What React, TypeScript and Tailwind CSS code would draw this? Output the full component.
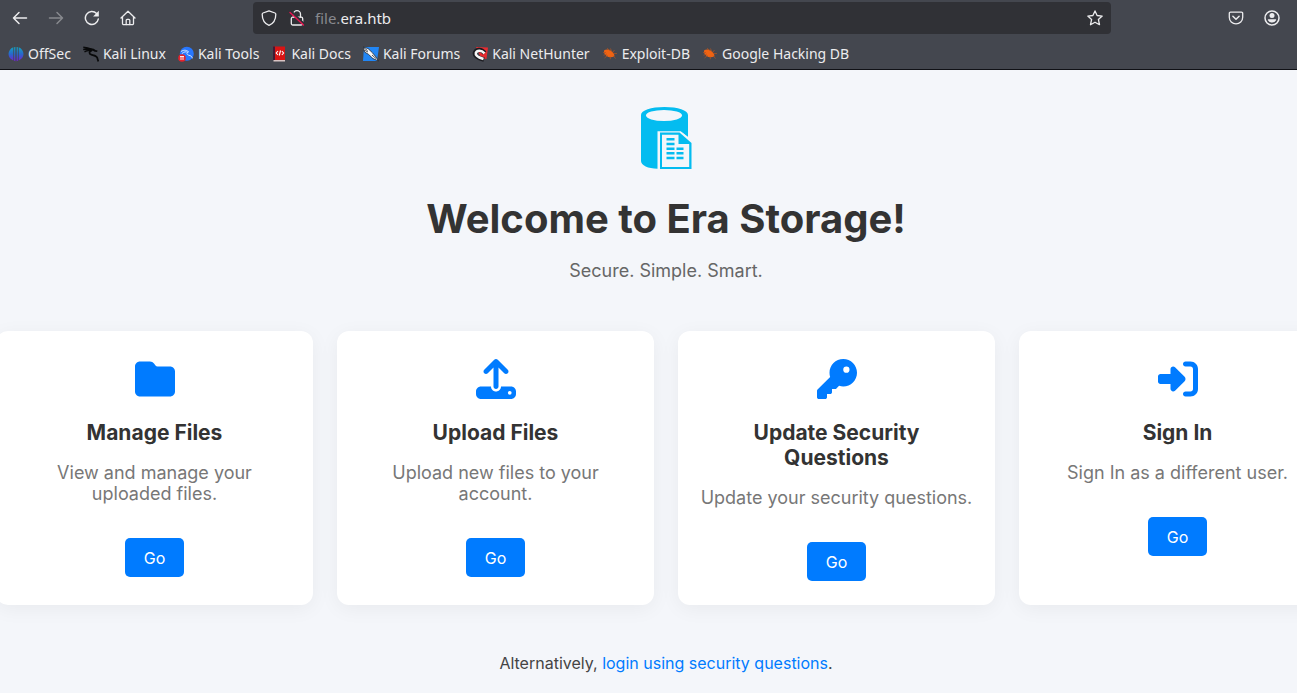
import type { ComponentType, ReactNode } from "react";
import { FaFolder, FaKey, FaRightToBracket, FaUpload } from "react-icons/fa6";

const stroke = {
  width: 16,
  height: 16,
  viewBox: "0 0 16 16",
  fill: "none",
  stroke: "currentColor",
  strokeWidth: 1.3,
  strokeLinecap: "round" as const,
  strokeLinejoin: "round" as const,
  "aria-hidden": true,
};

const BackIcon = () => (
  <svg {...stroke} strokeWidth="1.5"><path d="M14.500 8H1.500M7 2.500 1.500 8 7 13.500" /></svg>
);
const ForwardIcon = () => (
  <svg {...stroke} strokeWidth="1.5"><path d="M1.500 8h13M9 2.500 14.500 8 9 13.500" /></svg>
);
const ReloadIcon = () => (
  <svg {...stroke} strokeWidth="1.5">
    <path d="M14.300 9A6.500 6.500 0 1 1 12.600 3.500" />
    <path d="M14.800 .8v5.700H9.100z" fill="currentColor" stroke="none" />
  </svg>
);
const HomeIcon = () => (
  <svg {...stroke}>
    <path d="M1 8 8 1.200 15 8M2.500 6.800v6.700a1.200 1.200 0 0 0 1.200 1.200h8.600a1.200 1.200 0 0 0 1.200-1.200V6.800" />
    <path d="M6.200 14.500v-4.200a1 1 0 0 1 1-1h1.600a1 1 0 0 1 1 1v4.200" />
  </svg>
);
const ShieldIcon = () => (
  <svg {...stroke}>
    <path d="M8 .8 14 3q.8.300.8 1.200C14.800 9.500 12.500 13.500 8 15.400 3.500 13.500 1.200 9.500 1.200 4.200 1.200 3.300 2 3 2 3z" />
  </svg>
);
const InsecureIcon = () => (
  <svg {...stroke}>
    <rect x="2.300" y="7.200" width="11.400" height="7.800" rx="1.500" />
    <path d="M4.500 7V4.200a3.500 3.500 0 0 1 7 0V7" />
    <path d="m2 3 13 12.500" stroke="#303136" strokeWidth="2" transform="translate(.8 -1)" />
    <path d="m1 2.500 13.500 12.500" stroke="#e8124f" strokeWidth="1.400" />
  </svg>
);
const StarIcon = () => (
  <svg {...stroke}>
    <path d="m8 .9 2.100 4.600 5.100.6-3.800 3.400 1.100 5.200L8 12.200l-4.500 2.500 1.100-5.200L.8 6.100l5.100-.6z" />
  </svg>
);
const PocketIcon = () => (
  <svg {...stroke}>
    <path d="M2.500 2.200h11a1.200 1.200 0 0 1 1.200 1.200v3.800a6.700 6.700 0 0 1-13.400 0V3.400a1.200 1.200 0 0 1 1.200-1.200z" />
    <path d="M4.900 6.200 8 9.200l3.100-3" strokeWidth="1.500" />
  </svg>
);
const AccountIcon = () => (
  <svg {...stroke}>
    <circle cx="8" cy="8" r="7" strokeWidth="1.500" />
    <circle cx="8" cy="5.600" r="2.500" fill="currentColor" stroke="none" />
    <path d="M3.900 9.300h8.200v1A4.600 4.600 0 0 1 8 12.500a4.600 4.600 0 0 1-4.100-2.200z" fill="currentColor" stroke="none" />
  </svg>
);

const OffSecMark = () => (
  <svg width="16" height="16" viewBox="0 0 16 16" aria-hidden>
    <defs>
      <linearGradient id="offsec" x1="0" y1="0" x2="0" y2="1">
        <stop offset="0" stopColor="#14a3bd" />
        <stop offset=".5" stopColor="#2868cc" />
        <stop offset="1" stopColor="#7420cf" />
      </linearGradient>
    </defs>
    <path d="M5.300 1.200v13.200C2.500 13.300.5 11 .5 8s2-5.700 4.800-6.800zM7.400.9v14.300l-1.300-.5V1.300zM8.600.9l1.300.4v13.400l-1.300.5zM10.700 1.200C13.500 2.300 15.500 5 15.500 8s-2 5.300-4.800 6.400z" fill="url(#offsec)" />
  </svg>
);
const DragonMark = () => (
  <svg width="16" height="16" viewBox="0 0 16 16" fill="none" stroke="#08090a" aria-hidden>
    <path d="M.3 1.200c3 .2 5 .5 8 2M.2 3.500c3-.7 5-.3 7.500.5M1.500 5.800C4 4.400 6 4.300 8.500 4.800" strokeWidth="1.400" />
    <path d="M7 3.300c2.300-.3 4 .4 5.300 1.700l2 .2M9 4.300C5.800 5 5.800 8 8.300 8.700c2.700.7 5.500.8 6 3.200.2 1 .4 2.300 1.200 3.500" strokeWidth="1.800" />
  </svg>
);
const ToolsMark = () => (
  <svg width="16" height="16" viewBox="0 0 16 16" aria-hidden>
    <circle cx="8.800" cy="7.800" r="7" fill="#2777ff" />
    <path d="M3 5.500c3-2 6-1.500 8 .8M3.800 7.700C6 5.500 8 5.500 9.800 6.300 8 7.500 9.300 8.900 11 9.300c1.900.4 3 1.200 3.400 3" fill="none" stroke="#d8e8ff" strokeWidth="1" />
    <circle cx="4" cy="12" r="3.800" fill="#e3232d" />
    <path d="M2 10.500h4M3 10.500V14M5 10.500V14" stroke="#fff" strokeWidth=".9" />
  </svg>
);
const DocsMark = () => (
  <svg width="16" height="16" viewBox="0 0 16 16" aria-hidden>
    <path d="M2 .5h12V14H2z" fill="#d91414" />
    <path d="M2 .5h2V14H2z" fill="#421b35" />
    <path d="M2.500 14H14v1.500H2.500z" fill="#d8c4c4" />
    <path d="M7 5 5.200 7 7 9M10.800 5l1.800 2-1.800 2M9.500 4.500l-1.200 5" stroke="#fff" strokeWidth="1.100" fill="none" />
  </svg>
);
const ForumsMark = () => (
  <svg width="16" height="16" viewBox="0 0 16 16" aria-hidden>
    <path d="M1 1h15l-2 14H0z" fill="#2186f5" />
    <path d="m0 1 5 1.500 4.500 4.300 3.300 4L15.500 15 10 12.600 5.300 8.200 1.500 6z" fill="#f7f8fa" stroke="#20252d" strokeWidth=".8" />
    <path d="m.5 1.500 4 3M1 4l4 2M9 9l4 3.500" stroke="#20252d" strokeWidth=".8" />
  </svg>
);
const NetHunterMark = () => (
  <svg width="16" height="16" viewBox="0 0 16 16" aria-hidden>
    <path d="m4 1 12 .5L14.500 13 9 12z" fill="#e52b30" />
    <path d="M12.500 7C9 2.500 4 3.500 3 7c-.7 3.300 4.500 5.300 9 6.500" fill="none" stroke="#1b1b20" strokeWidth="4.600" />
    <path d="M12.500 7.300C9 3.500 4.800 4.500 3.800 7c-.8 2.700 4 4.800 7.700 6" fill="none" stroke="#f5f5f5" strokeWidth="2.500" />
  </svg>
);
const BugMark = () => (
  <svg width="16" height="16" viewBox="0 0 16 16" aria-hidden>
    <path d="M2.200 4.300c2-1.400 4.600-1.100 6.900.4 2.300 1.500 3.600 3.700 3.300 5.600-2.700 1.400-5.500 1.300-7.700-.2-2.100-1.400-3.200-3.600-2.500-5.800z" fill="#f06312" />
    <path d="M1 6.500h3M1.500 9.200 5 8M2.500 12l3.200-2.600M5 2.200l3 2.500M8.500 2.500l1.200 3.300M12.500 4l-2 2.600M15 7.600l-4-.2M11 9.500l2.500 3M8 10.500l.5 2.700" stroke="#b55320" strokeWidth=".7" />
  </svg>
);

const bookmarks: { label: string; Mark: ComponentType }[] = [
  { label: "OffSec", Mark: OffSecMark },
  { label: "Kali Linux", Mark: DragonMark },
  { label: "Kali Tools", Mark: ToolsMark },
  { label: "Kali Docs", Mark: DocsMark },
  { label: "Kali Forums", Mark: ForumsMark },
  { label: "Kali NetHunter", Mark: NetHunterMark },
  { label: "Exploit-DB", Mark: BugMark },
  { label: "Google Hacking DB", Mark: BugMark },
];

const cards: { title: string; text: string; Icon: ComponentType<{ className?: string }> }[] = [
  { title: "Manage Files", text: "View and manage your uploaded files.", Icon: FaFolder },
  { title: "Upload Files", text: "Upload new files to your account.", Icon: FaUpload },
  { title: "Update Security Questions", text: "Update your security questions.", Icon: FaKey },
  { title: "Sign In", text: "Sign In as a different user.", Icon: FaRightToBracket },
];

function ToolButton({ label, disabled, children }: { label: string; disabled?: boolean; children: ReactNode }) {
  return (
    <button type="button" aria-label={label} disabled={disabled} className="flex size-9 items-center justify-center disabled:opacity-40">
      {children}
    </button>
  );
}

function BrowserBar() {
  return (
    <header className="border-b border-[#101116] bg-[#44474f] font-['Noto_Sans',sans-serif] text-[#ececee]">
      <div className="flex h-9 items-center justify-between pr-[7px] pl-[2px]">
        <nav aria-label="Navigation" className="flex">
          <ToolButton label="Back"><BackIcon /></ToolButton>
          <ToolButton label="Forward" disabled><ForwardIcon /></ToolButton>
          <ToolButton label="Reload"><ReloadIcon /></ToolButton>
          <ToolButton label="Home"><HomeIcon /></ToolButton>
        </nav>
        <div className="ml-[107px] flex h-8 flex-1 items-center rounded bg-[#303136] px-2">
          <ShieldIcon />
          <span className="ml-3 flex"><InsecureIcon /></span>
          <label htmlFor="address" className="ml-[10px] text-[15px] text-[#88898e]">file.</label>
          <input id="address" defaultValue="era.htb" className="min-w-0 flex-1 bg-transparent text-[15px] outline-none" />
          <button type="button" aria-label="Bookmark this page"><StarIcon /></button>
        </div>
        <div className="ml-[107px] flex">
          <ToolButton label="Save to Pocket"><PocketIcon /></ToolButton>
          <ToolButton label="Account"><AccountIcon /></ToolButton>
        </div>
      </div>
      <nav aria-label="Bookmarks" className="flex h-[33px] items-center gap-3 px-2 pt-[2px] text-sm">
        {bookmarks.map(({ label, Mark }) => (
          <a key={label} href="#" className="flex items-center gap-1 whitespace-nowrap">
            <Mark />
            {label}
          </a>
        ))}
      </nav>
    </header>
  );
}

function StorageLogo() {
  return (
    <svg width="52" height="64" viewBox="0 0 52 64" className="mx-auto" role="img" aria-label="Era Storage">
      <path d="M1 9C1 4.500 11 1 24.500 1S48 4.500 48 9v22l-7.500-5.800H17.500V62.800C8 62.500 1 59.500 1 55z" fill="#04bcf0" />
      <ellipse cx="24" cy="9.500" rx="18" ry="5.500" fill="#f4f6fa" />
      <path d="M40.500 25.200 48 31v3h-8z" fill="#f4f6fa" />
      <path d="M20 26.500h19.500L51.500 37v26H20z" fill="#04bcf0" />
      <path d="M22 28.800h16.500V38h10.700v23H22z" fill="#f4f6fa" />
      <path d="M26.500 32h8v2.500h-8zm0 4.700h8v2.500h-8zm0 4.700h8v2.500h-8zm0 4.700h8v2.500h-8zm0 4.700h8v2.500h-8zm10-9.400h7v2.500h-7zm0 4.700h7v2.500h-7zm0 4.700h7v2.500h-7z" fill="#04bcf0" />
    </svg>
  );
}

export default function App() {
  return (
    <div className="min-h-screen overflow-x-hidden bg-[#f4f6fa] font-['Inter',sans-serif]">
      <BrowserBar />
      <main className="-mr-[39px] -ml-1 pt-9 pb-5 text-center">
        <StorageLogo />
        <h1 className="mt-6 text-[40px] leading-[50px] font-bold text-[#333]">Welcome to Era Storage!</h1>
        <p className="mt-4 text-lg leading-[22px] text-[#666]">Secure. Simple. Smart.</p>
        <section className="mt-[49px] grid grid-cols-4 gap-6">
          {cards.map(({ title, text, Icon }) => (
            <article key={title} className="flex flex-col items-center rounded-xl bg-white px-5 pt-7 pb-6 shadow-[0_4px_20px_rgba(0,0,0,0.05)]">
              <Icon className="size-10 text-[#007bff]" />
              <h2 className="mt-[21px] px-1 text-[21px] leading-[25px] font-bold text-[#333]">{title}</h2>
              <p className="mt-[17px] text-lg leading-[21px] text-[#777]">{text}</p>
              <button type="button" className="mt-[34px] h-[39px] rounded-[5px] bg-[#007bff] px-[19px] text-white">Go</button>
            </article>
          ))}
        </section>
        <p className="mt-[46px] text-base text-[#444]">
          Alternatively, <a href="#" className="text-[#007bff]">login using security questions</a>.
        </p>
      </main>
    </div>
  );
}
